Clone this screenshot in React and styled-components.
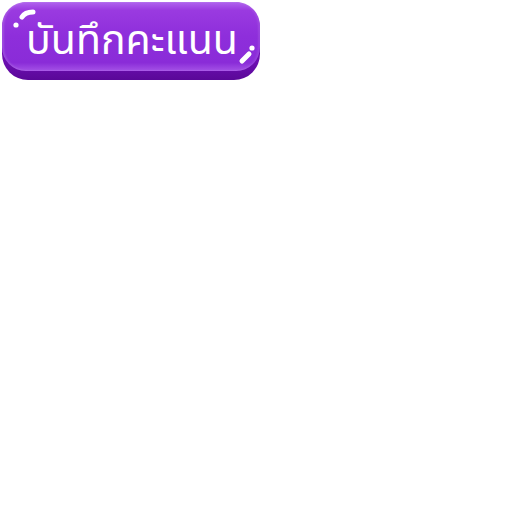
import React from "react";
import styled, { createGlobalStyle } from "styled-components";

const GlobalStyle = createGlobalStyle`
  html, body {
    margin: 0;
    padding: 0;
    background: #ffffff;
  }
`;

const Page = styled.div`
  padding: 2px 0 0 2px;
`;

const Button = styled.button`
  display: block;
  box-sizing: border-box;
  width: 258px;
  margin: 0;
  padding: 0 0 9px;
  border: none;
  border-radius: 26px;
  background: linear-gradient(180deg, #7a1cc0 0%, #6a0eae 80%, #5a0898 100%);
  cursor: pointer;
`;

const Face = styled.span`
  position: relative;
  display: flex;
  align-items: center;
  justify-content: center;
  height: 69px;
  padding: 10px 0 0 2px;
  box-sizing: border-box;
  border-radius: 24px;
  background: linear-gradient(180deg, #b064ee 0%, #9a3ae0 12%, #8e2edb 50%, #8a2cd8 88%, #a452e6 100%);
  box-shadow: inset 2px 0 2px rgba(255, 255, 255, 0.15), inset -2px 0 2px rgba(255, 255, 255, 0.1);
  color: #ffffff;
  font-family: "Noto Sans Thai", "Noto Sans", sans-serif;
  font-size: 41px;
  font-weight: 400;
  line-height: 1;
`;

const Gloss = styled.svg`
  position: absolute;
  top: 0;
  left: 0;
  pointer-events: none;
`;

export default function App() {
  return (
    <>
      <GlobalStyle />
      <Page>
        <Button>
          <Face>
            <Gloss width="258" height="69" viewBox="0 0 258 69">
              <path d="M20 15 Q23 10 31 10" stroke="#fff" strokeWidth="5" strokeLinecap="round" fill="none" />
              <circle cx="14" cy="23" r="2.6" fill="#fff" />
              <path d="M240 59 Q244 55 247 52" stroke="#fff" strokeWidth="5" strokeLinecap="round" fill="none" />
              <circle cx="250" cy="46" r="2.6" fill="#fff" />
            </Gloss>
            บันทึกคะแนน
          </Face>
        </Button>
      </Page>
    </>
  );
}
